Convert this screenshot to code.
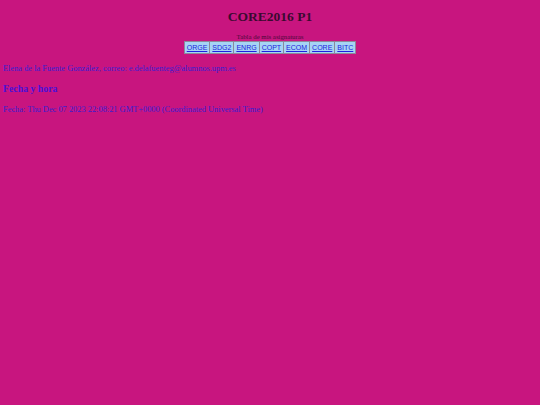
export default function App() {
  const subjects = ['ORGE', 'SDG2', 'ENRG', 'COPT', 'ECOM', 'CORE', 'BITC']
  return (
    <div className="min-h-[405px] bg-[#c8157f] pt-[9px] px-[3px] font-['Liberation_Serif',serif] text-[#3a1fd0]">
      <h1 className="text-center text-[13.5px] font-bold leading-[16px] text-[#3a0a30]">CORE2016 P1</h1>
      <table className="mx-auto mt-[8px] border border-[#9a9aa8] bg-[#c8157f]">
        <caption className="text-[6.8px] leading-[8px] text-[#4a0a3a]">Tabla de mis asignaturas</caption>
        <tbody>
          <tr>
            {subjects.map((s) => (
              <td key={s} className="border border-[#8a8a9a] bg-[#a6d4f4] px-[2px] py-[1.5px] font-['Liberation_Sans',sans-serif] text-[7px] leading-[8px]">
                <a href="#" className="text-[#2020e0] underline">{s}</a>
              </td>
            ))}
          </tr>
        </tbody>
      </table>
      <p className="mt-[10px] text-[8.4px] leading-[10px]">Elena de la Fuente González, correo: e.delafuenteg@alumnos.upm.es</p>
      <h2 className="mt-[9px] text-[9.8px] font-bold leading-[12px] text-[#4b10d8]">Fecha y hora</h2>
      <p className="mt-[10px] text-[8.4px] leading-[10px]">Fecha: Thu Dec 07 2023 22:08:21 GMT+0000 (Coordinated Universal Time)</p>
    </div>
  )
}
